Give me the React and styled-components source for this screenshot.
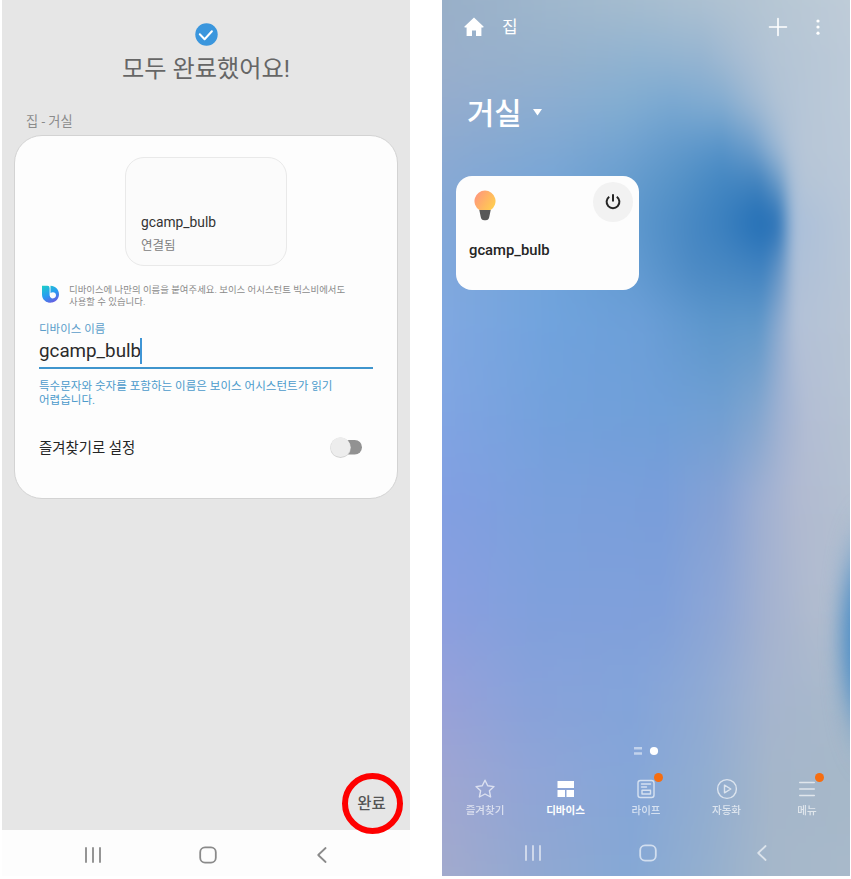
import React from "react";
import styled, { createGlobalStyle } from "styled-components";

const GlobalStyle = createGlobalStyle`
  * { box-sizing: border-box; }
  html, body { margin: 0; padding: 0; background: #fff; }
  body { font-family: Roboto, "Noto Sans CJK KR", sans-serif; overflow: hidden; }
  svg { display: block; flex: none; }
`;

const Page = styled.main`
  width: 851px;
  height: 879px;
  padding-left: 2px;
  display: flex;
  gap: 32px;
  align-items: flex-start;
`;

const Phone = styled.section`
  width: 408px;
  height: 876px;
  display: flex;
  flex-direction: column;
  overflow: hidden;
  flex: none;
`;

const SetupScreen = styled(Phone)`
  background: #e6e6e6;
`;

const HomeScreen = styled(Phone)`
  position: relative;
  isolation: isolate;
  color: #fff;
`;

const Label = styled.div`
  font-size: ${(p) => p.$size}px;
  line-height: ${(p) => p.$line}px;
  font-weight: ${(p) => p.$weight || 400};
  color: ${(p) => p.$color};
  white-space: nowrap;
`;

const SuccessHeader = styled.header`
  height: 111px;
  padding-top: 23px;
  display: flex;
  flex-direction: column;
  align-items: center;
  gap: 6px;
`;

const Location = styled.div`
  height: 24px;
  padding-left: 24px;
`;

const SetupCard = styled.div`
  width: 384px;
  height: 364px;
  margin-left: 12px;
  padding: 21px 24px 0;
  border: 1px solid #d3d3d3;
  border-radius: 28px;
  background: #fdfdfd;
  display: flex;
  flex-direction: column;
`;

const DevicePreview = styled.div`
  width: 162px;
  height: 109px;
  margin-left: 86px;
  padding: 55px 15px 0;
  border: 1px solid #e9e9e9;
  border-radius: 19px;
  background: #fbfbfb;
  display: flex;
  flex-direction: column;
  gap: 5px;
`;

const Hint = styled.div`
  display: flex;
  gap: 10px;
  margin-top: 18px;
  height: 37px;
  padding-left: 3px;
`;

const HintIcon = styled.div`
  padding-top: 1px;
`;

const NameField = styled.div`
  width: 334px;
  height: 48px;
  border-bottom: 2px solid #3f95cd;
`;

const NameInput = styled.div`
  display: flex;
  align-items: center;
  height: 26px;
  margin-top: 1px;
`;

const Caret = styled.span`
  width: 2px;
  height: 26px;
  margin-left: -1px;
  background: #3f95d5;
`;

const HelperText = styled.div`
  margin-top: 10px;
`;

const FavoriteRow = styled.div`
  display: flex;
  justify-content: space-between;
  align-items: center;
  height: 28px;
  margin: 27px 10px 0 0;
`;

const DoneBar = styled.footer`
  flex: 1;
  display: flex;
  justify-content: flex-end;
  align-items: flex-end;
  padding: 0 7px 0 0;
  margin-bottom: -4px;
  position: relative;
  z-index: 1;
`;

const DoneButton = styled.button`
  width: 61px;
  height: 61px;
  padding: 0 2px 3px 0;
  border: 6px solid #fe0000;
  border-radius: 50%;
  background: transparent;
  font-family: inherit;
  font-size: 15.5px;
  font-weight: 500;
  color: #555;
  white-space: nowrap;
`;

const SystemNav = styled.nav`
  height: 46px;
  flex: none;
  background: ${(p) => (p.$light ? "#fdfdfd" : "transparent")};
  color: ${(p) => (p.$light ? "#8a8a8a" : "rgba(255,255,255,.62)")};
  display: grid;
  grid-template-columns: repeat(3, 114.5px);
  justify-content: center;
  justify-items: center;
  align-items: center;
  padding-top: ${(p) => (p.$light ? 4 : 0)}px;
  padding-left: 3px;
`;

const Wallpaper = styled.svg`
  position: absolute;
  inset: 0;
  z-index: -1;
`;

const AppBar = styled.header`
  height: 53px;
  padding: 0 29px 0 21px;
  display: flex;
  align-items: center;
`;

const HomeName = styled(Label)`
  margin-left: 17px;
  flex: 1;
`;

const AppActions = styled.div`
  display: flex;
  align-items: center;
  gap: 27px;
`;

const RoomTitle = styled.div`
  height: 123px;
  padding: 40px 0 0 25px;
  display: flex;
  align-items: flex-start;
  gap: 11px;
`;

const ArrowSlot = styled.div`
  padding-top: 16px;
`;

const DeviceCard = styled.article`
  width: 183px;
  height: 114px;
  margin-left: 14px;
  padding: 6px 6px 0 13px;
  border-radius: 16px;
  background: #fdfdfd;
`;

const DeviceTop = styled.div`
  display: flex;
  justify-content: space-between;
  height: 57px;
`;

const BulbSlot = styled.div`
  padding: 8px 0 0 5px;
`;

const PowerButton = styled.button`
  width: 40px;
  height: 40px;
  padding: 0;
  border: 0;
  border-radius: 50%;
  background: #f2f2f2;
  display: grid;
  place-items: center;
`;

const Pager = styled.div`
  margin-top: auto;
  height: 10px;
  display: flex;
  align-items: center;
  justify-content: center;
`;

const TabBar = styled.nav`
  height: 74px;
  display: grid;
  grid-template-columns: repeat(5, 80.5px);
  justify-content: center;
  padding-top: 22px;
`;

const Tab = styled.div`
  display: flex;
  flex-direction: column;
  align-items: center;
  gap: 2px;
  color: #fff;
  opacity: ${(p) => (p.$active ? 1 : 0.66)};
`;

const TabSlot = styled.div`
  position: relative;
`;

const Badge = styled.span`
  position: absolute;
  left: 48px;
  top: -5px;
  width: 9px;
  height: 9px;
  border-radius: 50%;
  background: #f66d10;
`;

/* Wallpaper colour rows: [y, [[x, colour], ...]] */
const skyRows = [
  [0, [[0, "#98afc8"], [110, "#a0b8cd"], [210, "#a8bed0"], [310, "#b4c5d3"], [408, "#bfccd8"]]],
  [60, [[0, "#99afcb"], [110, "#95b1cd"], [200, "#90b3d1"], [260, "#95b4d1"], [300, "#a8bdd3"], [330, "#b3c4d5"], [408, "#bccad8"]]],
  [105, [[0, "#94acce"], [110, "#8badd1"], [180, "#82add2"], [230, "#79a8d1"], [280, "#82acd1"], [310, "#9db8d3"], [335, "#b0c2d5"], [360, "#b6c6d7"], [408, "#bccad8"]]],
  [150, [[0, "#8caad1"], [110, "#7fa8d3"], [180, "#72a3d1"], [230, "#639acc"], [280, "#5592c8"], [310, "#6a9ccb"], [328, "#8fb1d3"], [347, "#b0c2d7"], [362, "#b7c6d7"], [408, "#bbc9d8"]]],
  [180, [[0, "#88a9d5"], [110, "#78a6d6"], [180, "#699ecf"], [230, "#5894c8"], [280, "#4487c2"], [318, "#4283be"], [337, "#719fca"], [350, "#a9bfd7"], [362, "#b5c5d7"], [408, "#bac8d8"]]],
  [222, [[0, "#84a8d8"], [110, "#73a4d8"], [180, "#629bcf"], [230, "#4f8dc6"], [280, "#3a7fbe"], [315, "#236fb6"], [336, "#266fb5"], [344, "#6497c8"], [353, "#aabfda"], [408, "#b9c7d7"]]],
  [265, [[0, "#81a8dc"], [110, "#70a3db"], [190, "#639bd1"], [250, "#4c8ac4"], [322, "#3e81bf"], [338, "#6595c6"], [353, "#aec0d8"], [408, "#b8c6d7"]]],
  [325, [[0, "#80a8e1"], [110, "#70a3dd"], [200, "#6c9fd8"], [270, "#5d97cc"], [318, "#6098ca"], [338, "#90acd0"], [354, "#b3c1d7"], [408, "#b8c5d5"]]],
  [410, [[0, "#80a5e2"], [110, "#73a1dc"], [220, "#6f9fd8"], [280, "#709fd2"], [315, "#80a5cf"], [340, "#a0b2d2"], [365, "#b3bed4"], [408, "#b6c3d3"]]],
  [500, [[0, "#829fe2"], [110, "#7aa0dc"], [220, "#799eda"], [280, "#86a2d4"], [320, "#a0b0d2"], [355, "#b1bad1"], [408, "#b4c0d1"]]],
  [610, [[0, "#8a9fdf"], [100, "#80a0dc"], [220, "#80a0da"], [280, "#8fa7d5"], [325, "#a4b2d0"], [370, "#b0bbcf"], [408, "#b0becf"]]],
  [700, [[0, "#97a1d9"], [90, "#88a2da"], [190, "#83a4da"], [260, "#8faad4"], [330, "#a6b5ce"], [408, "#a9bacb"]]],
  [780, [[0, "#9fa6d2"], [90, "#90a5d7"], [190, "#85a6d8"], [265, "#91add1"], [330, "#a5b6ca"], [408, "#a6b8c9"]]],
  [876, [[0, "#a2aacd"], [90, "#91a8d1"], [190, "#85a8d5"], [265, "#94afce"], [330, "#a5b7ca"], [408, "#a8b9ca"]]],
];

const bleed = { x: -80, y: -80, width: 568, height: 1036 };

function Sky() {
  return (
    <Wallpaper width="408" height="876" viewBox="0 0 408 876" aria-hidden="true">
      <defs>
        {skyRows.map(([y, stops], i) => (
          <React.Fragment key={y}>
            <linearGradient id={`row${i}`} gradientUnits="userSpaceOnUse" x1="0" x2="408" y1="0" y2="0">
              {stops.map(([x, c]) => <stop key={x} offset={x / 408} stopColor={c} />)}
            </linearGradient>
            {i > 0 && (
              <>
                <linearGradient id={`fade${i}`} gradientUnits="userSpaceOnUse" x1="0" x2="0" y1={skyRows[i - 1][0]} y2={y}>
                  <stop offset="0" stopColor="#fff" stopOpacity="0" />
                  <stop offset="1" stopColor="#fff" />
                </linearGradient>
                <mask id={`mask${i}`} maskUnits="userSpaceOnUse" {...bleed} style={{ maskType: "alpha" }}>
                  <rect {...bleed} fill={`url(#fade${i})`} />
                </mask>
              </>
            )}
          </React.Fragment>
        ))}
        <filter id="smooth" filterUnits="userSpaceOnUse" {...bleed} colorInterpolationFilters="sRGB"><feGaussianBlur stdDeviation="5 14" /></filter>
        <filter id="soft" x="-150%" y="-60%" width="400%" height="220%" colorInterpolationFilters="sRGB"><feGaussianBlur stdDeviation="10 28" /></filter>
      </defs>
      <g filter="url(#smooth)">
        {skyRows.map(([y], i) => (
          <rect key={y} {...bleed} fill={`url(#row${i})`} mask={i ? `url(#mask${i})` : undefined} />
        ))}
      </g>
      <ellipse cx="423" cy="638" rx="24" ry="86" fill="#4a8cc5" filter="url(#soft)" />
    </Wallpaper>
  );
}

const stroke = { fill: "none", stroke: "currentColor", strokeLinecap: "round", strokeLinejoin: "round" };

const NavIcons = () => (
  <>
    <svg width="18" height="18" viewBox="0 0 18 18" {...stroke} strokeWidth="1.8"><path d="M2 2v14M9 2v14M16 2v14" /></svg>
    <svg width="18" height="18" viewBox="0 0 18 18" {...stroke} strokeWidth="1.8"><rect x="1.2" y="1.4" width="15.6" height="15.2" rx="4.8" /></svg>
    <svg width="18" height="18" viewBox="0 0 18 18" {...stroke} strokeWidth="1.8"><path d="M12.6 2 5.2 9l7.4 7" /></svg>
  </>
);

const tabs = [
  { name: "즐겨찾기", icon: <path d="m11 2.2 2.7 5.6 6.3.8-4.6 4.2 1.2 6.2-5.6-3-5.6 3 1.2-6.2L2 8.600l6.300-.8z" /> },
  { name: "디바이스", active: true, icon: <g fill="currentColor" stroke="none"><path d="M2.500 3H19v7H2.500zM2.500 12H10v7H2.500zM11.500 12H19v7h-7.500z" /></g> },
  { name: "라이프", badge: true, icon: <><rect x="3" y="2.500" width="16" height="17" rx="2.500" /><path d="M6.500 6h9M6.500 9h5M7 12.300h8.500v3.700H7z" /></> },
  { name: "자동화", icon: <><circle cx="11" cy="11" r="9.400" /><path d="M8.500 7.200v7.600l6.300-3.800z" /></> },
  { name: "메뉴", badge: true, icon: <path d="M3.700 4.500h14.600M3.700 11h14.600M3.700 17.500h14.600" /> },
];

export default function App() {
  return (
    <>
      <GlobalStyle />
      <Page>
        <SetupScreen>
          <SuccessHeader>
            <svg width="23" height="23" viewBox="0 0 23 23"><circle cx="11.500" cy="11.500" r="11.200" fill="#3a96dd" /><path d="m4.800 11.200 4.800 5 7.300-7.900" fill="none" stroke="#fff" strokeWidth="2" strokeLinecap="round" strokeLinejoin="round" /></svg>
            <Label $size={24.2} $line={35} $color="#666">모두 완료했어요!</Label>
          </SuccessHeader>
          <Location><Label $size={13.2} $line={22} $color="#8b8b8b">집 - 거실</Label></Location>
          <SetupCard>
            <DevicePreview>
              <Label $size={13.8} $line={19} $color="#333">gcamp_bulb</Label>
              <Label $size={12.5} $line={18} $color="#808080">연결됨</Label>
            </DevicePreview>
            <Hint>
              <HintIcon>
                <svg width="17" height="18" viewBox="0 0 17 18">
                  <defs><linearGradient id="voice" gradientUnits="userSpaceOnUse" x1="2" y1="0" x2="11" y2="18"><stop stopColor="#1ccfc8" /><stop offset=".55" stopColor="#2a9bf2" /><stop offset="1" stopColor="#6a5ae0" /></linearGradient></defs>
                  <path fill="url(#voice)" d="M0 .8h5.400q2.200 0 2.200 2.200v7.500q0 3 2.700 5.200l-1.800 1.800C3.500 17.500 0 14.200 0 9.400z" />
                  <path fill="url(#voice)" fillRule="evenodd" d="M8.500.8c4.900.3 8.500 3.700 8.500 8.400 0 4.900-3.700 8.300-8.500 8.300-2.700 0-4.600-.9-5.600-2l4.700-5c.2 1.800 1.500 2.900 3.200 2.900 1.900 0 3.200-1.300 3.200-3.100s-1.300-3-3.100-3c-.9 0-1.700.3-2.400.8z" />
                </svg>
              </HintIcon>
              <Label $size={9.42} $line={11.5} $color="#8b8b8b">디바이스에 나만의 이름을 붙여주세요. 보이스 어시스턴트 빅스비에서도<br />사용할 수 있습니다.</Label>
            </Hint>
            <NameField>
              <Label $size={11.5} $line={16} $color="#5b9dca">디바이스 이름</Label>
              <NameInput><Label $size={18.8} $line={26} $color="#2b2b2b">gcamp_bulb</Label><Caret /></NameInput>
            </NameField>
            <HelperText><Label $size={11.55} $line={14} $color="#4b9acb">특수문자와 숫자를 포함하는 이름은 보이스 어시스턴트가 읽기<br />어렵습니다.</Label></HelperText>
            <FavoriteRow>
              <Label $size={14.4} $line={23} $color="#252525">즐겨찾기로 설정</Label>
              <svg width="33" height="24" viewBox="0 0 33 24"><rect x="7" y="4" width="25" height="14.500" rx="7.250" fill="#929292" /><circle cx="10.500" cy="11.800" r="10.300" fill="#d2d2d2" /><circle cx="10.500" cy="11.200" r="9.900" fill="#ededed" /></svg>
            </FavoriteRow>
          </SetupCard>
          <DoneBar><DoneButton>완료</DoneButton></DoneBar>
          <SystemNav $light><NavIcons /></SystemNav>
        </SetupScreen>

        <HomeScreen>
          <Sky />
          <AppBar>
            <svg width="22" height="22" viewBox="0 0 22 22"><path fill="#fff" d="M11 1.500 1.500 10.600c-.4.400-.1.900.4.900h1.700V20h5.400v-5.500h4V20h5.400v-8.500h1.700c.5 0 .8-.5.400-.9z" /></svg>
            <HomeName $size={17} $line={24} $color="#fff">집</HomeName>
            <AppActions>
              <svg width="20" height="20" viewBox="0 0 20 20" {...stroke} strokeWidth="1.600"><path d="M10 1.500v17M1.500 10h17" /></svg>
              <svg width="6" height="20" viewBox="0 0 6 20" fill="#fff"><circle cx="3" cy="4" r="1.600" /><circle cx="3" cy="10" r="1.600" /><circle cx="3" cy="16.200" r="1.600" /></svg>
            </AppActions>
          </AppBar>
          <RoomTitle>
            <Label $size={29.7} $line={42} $weight={500} $color="#fff">거실</Label>
            <ArrowSlot><svg width="9" height="7" viewBox="0 0 9 7"><path fill="#fff" d="M0 0h9L4.500 6.500z" /></svg></ArrowSlot>
          </RoomTitle>
          <DeviceCard>
            <DeviceTop>
              <BulbSlot>
                <svg width="22" height="31" viewBox="0 0 22 31">
                  <defs><linearGradient id="bulb" x1="0" y1=".2" x2="1" y2=".8"><stop stopColor="#ff967d" /><stop offset=".6" stopColor="#ffb960" /><stop offset="1" stopColor="#ffcf51" /></linearGradient></defs>
                  <path fill="url(#bulb)" d="M11 .5A10.600 10.600 0 0 0 5.300 20h11.400A10.600 10.600 0 0 0 11 .5" />
                  <path fill="#585858" d="M5.300 20h11.400l-1.500 7.300a3.600 3.600 0 0 1-3.500 2.900h-1.400a3.600 3.600 0 0 1-3.500-2.900z" />
                </svg>
              </BulbSlot>
              <PowerButton aria-label="power">
                <svg width="18" height="18" viewBox="0 0 18 18" fill="none" stroke="#252525" strokeWidth="2"><path d="M9 1.300v7.200M5.200 3.700a6.400 6.400 0 1 0 7.600 0" /></svg>
              </PowerButton>
            </DeviceTop>
            <Label $size={14.8} $line={22} $weight={500} $color="#252525">gcamp_bulb</Label>
          </DeviceCard>
          <Pager>
            <svg width="26" height="10" viewBox="0 0 26 10"><path d="M1 1h8v2.500H1zM1 6.300h8v2.500H1z" fill="#fff" opacity=".5" /><circle cx="21" cy="5" r="4.100" fill="#fff" /></svg>
          </Pager>
          <TabBar>
            {tabs.map((t) => (
              <TabSlot key={t.name}>
                <Tab $active={t.active}>
                  <svg width="22" height="22" viewBox="0 0 22 22" {...stroke} strokeWidth="1.400">{t.icon}</svg>
                  <Label $size={10.500} $line={18} $weight={t.active ? 700 : 500} $color="#fff">{t.name}</Label>
                </Tab>
                {t.badge && <Badge />}
              </TabSlot>
            ))}
          </TabBar>
          <SystemNav><NavIcons /></SystemNav>
        </HomeScreen>
      </Page>
    </>
  );
}
